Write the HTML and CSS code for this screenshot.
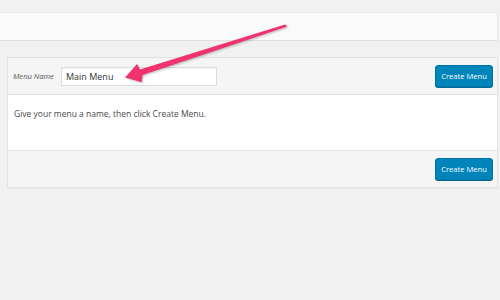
FILE: index.html
```html
<!DOCTYPE html>
<html>
<head>
<meta charset="utf-8">
<link rel="stylesheet" href="styles.css">
</head>
<body>
<div class="topbar"></div>
<div class="panel">
  <div class="panel-head">
    <label class="label">Menu Name</label>
    <input class="name-input" type="text" value="Main Menu">
    <span class="spacer"></span>
    <button class="btn">Create Menu</button>
  </div>
  <div class="panel-body">
    <p class="hint">Give your menu a name, then click Create Menu.</p>
  </div>
  <div class="panel-foot">
    <button class="btn">Create Menu</button>
  </div>
</div>
<svg class="arrow" width="500" height="300" viewBox="0 0 500 300">
  <polygon points="285,24.6 287.3,26.6 142.6,75 141.6,82.2 125,77.6 137,64 140,69.6" fill="#f0336f"/>
</svg>
</body>
</html>
```
FILE: styles.css
```css
html, body {
  margin: 0;
  padding: 0;
}
body {
  width: 500px;
  height: 300px;
  background: #f1f1f1;
  font-family: "Open Sans", "Liberation Sans", sans-serif;
  font-stretch: 90%;
  color: #444;
  overflow: hidden;
  position: relative;
}
.topbar {
  margin-top: 12px;
  width: 497px;
  height: 27px;
  background: #fafafa;
  border-top: 1px solid #e9e9e9;
  border-bottom: 1px solid #e0e0e0;
  border-right: 1px solid #e6e6e6;
}
.panel {
  margin: 16px 0 0 7px;
  width: 489px;
  border: 1px solid #e3e3e3;
  box-shadow: 0 1px 1px rgba(0,0,0,0.04);
  background: #f5f5f5;
}
.panel-head {
  display: flex;
  align-items: center;
  height: 36px;
  padding: 0 4px 0 5px;
  border-bottom: 1px solid #dddddd;
}
.label {
  flex: 0 0 48px;
  white-space: nowrap;
  font-style: italic;
  font-size: 7.6px;
  font-stretch: 90%;
  color: #555;
}
.name-input {
  flex: 0 0 auto;
  box-sizing: border-box;
  width: 156px;
  height: 19px;
  border: 1px solid #dcdcdc;
  background: #fff;
  padding: 0 4px;
  font-family: inherit;
  font-stretch: 90%;
  font-size: 9px;
  color: #333;
  outline: none;
  box-shadow: inset 0 1px 1px rgba(0,0,0,0.04);
}
.spacer {
  flex: 1;
}
.btn {
  flex: 0 0 auto;
  box-sizing: border-box;
  width: 58px;
  height: 22px;
  padding: 0;
  background: #0085ba;
  border: 1px solid #0073aa;
  border-radius: 3px;
  box-shadow: 0 1px 0 #006799;
  color: #fff;
  font-family: inherit;
  font-stretch: 90%;
  font-size: 7.6px;
  white-space: nowrap;
}
.panel-body {
  background: #fff;
  height: 55px;
  border-bottom: 1px solid #e3e3e3;
  padding: 0 6px;
  overflow: hidden;
}
.hint {
  margin: 13px 0 0 0;
  font-size: 8.5px;
  color: #4a4a4a;
}
.panel-foot {
  height: 36px;
  display: flex;
  align-items: center;
  justify-content: flex-end;
  padding: 0 4px;
}
.arrow {
  position: absolute;
  left: 0;
  top: 0;
  filter: drop-shadow(1px 1px 1px rgba(0,0,0,0.25));
}
```
